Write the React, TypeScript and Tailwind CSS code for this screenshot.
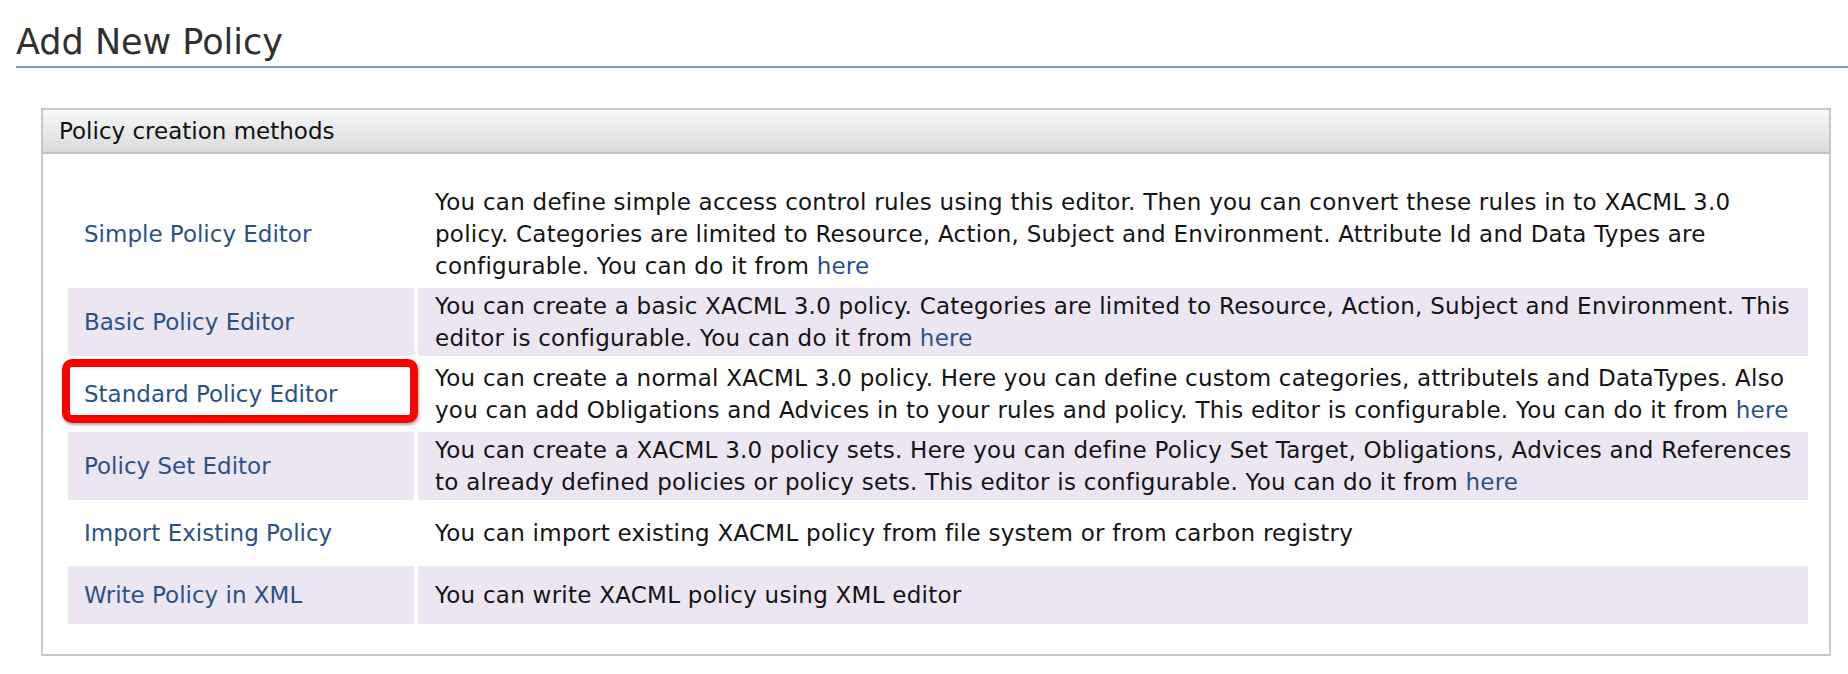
const methods = [
  {
    name: "Simple Policy Editor",
    lines: [
      "You can define simple access control rules using this editor. Then you can convert these rules in to XACML 3.0",
      "policy. Categories are limited to Resource, Action, Subject and Environment. Attribute Id and Data Types are",
      "configurable. You can do it from ",
    ],
    here: true,
    shaded: false,
  },
  {
    name: "Basic Policy Editor",
    lines: [
      "You can create a basic XACML 3.0 policy. Categories are limited to Resource, Action, Subject and Environment. This",
      "editor is configurable. You can do it from ",
    ],
    here: true,
    shaded: true,
  },
  {
    name: "Standard Policy Editor",
    lines: [
      "You can create a normal XACML 3.0 policy. Here you can define custom categories, attributeIs and DataTypes. Also",
      "you can add Obligations and Advices in to your rules and policy. This editor is configurable. You can do it from ",
    ],
    here: true,
    shaded: false,
    marked: true,
  },
  {
    name: "Policy Set Editor",
    lines: [
      "You can create a XACML 3.0 policy sets. Here you can define Policy Set Target, Obligations, Advices and References",
      "to already defined policies or policy sets. This editor is configurable. You can do it from ",
    ],
    here: true,
    shaded: true,
  },
  {
    name: "Import Existing Policy",
    lines: ["You can import existing XACML policy from file system or from carbon registry"],
    here: false,
    shaded: false,
  },
  {
    name: "Write Policy in XML",
    lines: ["You can write XACML policy using XML editor"],
    here: false,
    shaded: true,
  },
];

export default function App() {
  return (
    <div className="min-h-screen bg-white pl-4 pt-[25px] font-['DejaVu_Sans',sans-serif]">
      <h1 className="border-b-2 border-[#8498c2] pb-[6px] text-[35px] leading-[35px] font-normal text-[#303030]">
        Add New Policy
      </h1>

      <div className="mt-[40px] ml-[25px] mr-[17px] border-2 border-[#c8c8c8]">
        <div className="border-b-2 border-[#c2c2c2] bg-gradient-to-b from-[#f8f8f8] to-[#d8dbdc] px-4 py-[5px] text-[23px] leading-[32px] text-[#111111]">
          Policy creation methods
        </div>

        <div className="pl-[21px] pr-[17px] pt-[26px] pb-[26px]">
          <table className="w-full table-fixed border-separate border-spacing-[4px] text-[23px] leading-[32px]">
            <colgroup>
              <col className="w-[346px]" />
              <col />
            </colgroup>
            <tbody>
              {methods.map((m) => (
                <tr key={m.name} className={m.shaded ? "bg-[#ebe6f1]" : "bg-white"}>
                  <td className="relative py-[13px] pl-4 align-middle">
                    {m.marked && (
                      <span className="pointer-events-none absolute -top-[1px] bottom-[5px] -left-[6px] -right-[4px] rounded-[10px] border-[8px] border-[#fe0000] shadow-[1px_2px_3px_rgba(0,0,0,0.35)]" />
                    )}
                    <a href="#" className="relative whitespace-nowrap text-[#2b5288]">
                      {m.name}
                    </a>
                  </td>
                  <td className="py-[2px] pl-[17px] align-middle whitespace-nowrap tracking-[0.25px] text-[#141414]">
                    {m.lines.map((line, i) => (
                      <div key={i}>
                        {line}
                        {m.here && i === m.lines.length - 1 && (
                          <a href="#" className="text-[#2b5288]">
                            here
                          </a>
                        )}
                      </div>
                    ))}
                  </td>
                </tr>
              ))}
            </tbody>
          </table>
        </div>
      </div>
    </div>
  );
}
